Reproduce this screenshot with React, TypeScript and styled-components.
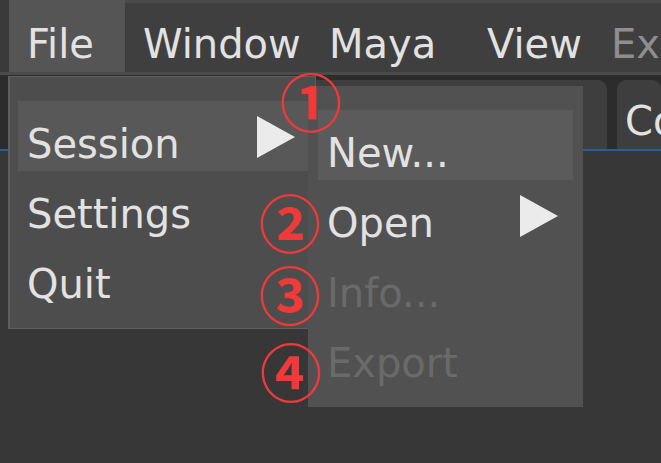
import styled, { createGlobalStyle } from "styled-components";

const GlobalStyle = createGlobalStyle`
  html, body {
    margin: 0;
    padding: 0;
    width: 661px;
    height: 463px;
    overflow: hidden;
    background: #373737;
  }
  body {
    font-family: "DejaVu Sans", "Liberation Sans", sans-serif;
  }
`;

const Screen = styled.div`
  position: relative;
  width: 661px;
  height: 463px;
  display: flex;
  flex-direction: column;
  background: #373737;
`;

const MenuBar = styled.div`
  display: flex;
  height: 72px;
  padding-left: 9px;
  background: linear-gradient(#4a4a4a 0 3px, #3f3f3f 3px);
  border-bottom: 3px solid #4b4b4b;
  box-shadow: inset 9px 0 0 #3a3a3a;
`;

const MenuTitle = styled.div<{ $w?: number; $active?: boolean; $disabled?: boolean }>`
  box-sizing: border-box;
  flex: ${(p) => (p.$w ? `0 0 ${p.$w}px` : "1 1 auto")};
  height: 72px;
  padding: 24px 0 0 18px;
  font-size: 40px;
  line-height: 1;
  white-space: nowrap;
  overflow: hidden;
  color: ${(p) => (p.$disabled ? "#8e8e8e" : "#e2e2e2")};
  background: ${(p) => (p.$active ? "#555555" : "transparent")};
`;

const TabBar = styled.div`
  display: flex;
  align-items: flex-end;
  gap: 10px;
  height: 74px;
  padding-left: 300px;
  background: #2c2c2c;
  border-bottom: 2px solid #2b5f8f;
`;

const Tab = styled.div<{ $w?: number }>`
  box-sizing: border-box;
  flex: ${(p) => (p.$w ? `0 0 ${p.$w}px` : "1 1 auto")};
  height: 69px;
  padding: 21px 0 0 8px;
  border-radius: 9px 9px 0 0;
  background: #3e3e3e;
  color: #e2e2e2;
  font-size: 40px;
  line-height: 1;
  white-space: nowrap;
  overflow: hidden;
`;

const Workspace = styled.div`
  flex: 1;
  background: #373737;
`;

const MenuPanel = styled.div<{ $x: number; $y: number; $w: number; $bg: string; $border?: string }>`
  position: absolute;
  left: ${(p) => p.$x}px;
  top: ${(p) => p.$y}px;
  width: ${(p) => p.$w}px;
  box-sizing: border-box;
  display: flex;
  flex-direction: column;
  padding: 24px 0 17px 8px;
  background: ${(p) => p.$bg};
  border: ${(p) => (p.$border ? `1px solid ${p.$border}` : "none")};
  border-left-width: ${(p) => (p.$border ? "2px" : "0")};
`;

const MenuRow = styled.div<{ $hl?: string; $disabled?: boolean; $inset: number }>`
  box-sizing: border-box;
  display: flex;
  justify-content: space-between;
  height: 70px;
  margin-right: ${(p) => p.$inset}px;
  padding: 23px 15px 0 9px;
  font-size: 40px;
  line-height: 1;
  white-space: nowrap;
  color: ${(p) => (p.$disabled ? "#6a6a6a" : "#e2e2e2")};
  background: ${(p) => p.$hl ?? "transparent"};
`;

const Arrow = styled.svg`
  width: 38px;
  height: 42px;
  margin-top: -8px;
  flex: none;
`;

const Marker = styled.div<{ $x: number; $y: number }>`
  position: absolute;
  left: ${(p) => p.$x}px;
  top: ${(p) => p.$y}px;
  transform: translate(-50%, -50%);
  font-family: "Noto Sans CJK JP", "Noto Sans CJK SC", sans-serif;
  font-size: 62px;
  font-weight: 700;
  line-height: 1;
  color: #f03a3a;
`;

const SubArrow = () => (
  <Arrow viewBox="0 0 38 42">
    <polygon points="0,0 38,21 0,42" fill="#ebebeb" />
  </Arrow>
);

const titles = [
  { label: "File", w: 116, active: true },
  { label: "Window", w: 186 },
  { label: "Maya", w: 158 },
  { label: "View", w: 124 },
  { label: "Export", disabled: true },
];

const fileItems = [
  { label: "Session", sub: true, hl: true },
  { label: "Settings" },
  { label: "Quit" },
];

const sessionItems = [
  { label: "New...", hl: true },
  { label: "Open", sub: true },
  { label: "Info...", disabled: true },
  { label: "Export", disabled: true },
];

const markers = [
  { n: "①", x: 311, y: 100 },
  { n: "②", x: 290, y: 221 },
  { n: "③", x: 290, y: 293 },
  { n: "④", x: 291, y: 370 },
];

export default function App() {
  return (
    <Screen>
      <GlobalStyle />
      <MenuBar>
        {titles.map((t) => (
          <MenuTitle key={t.label} $w={t.w} $active={t.active} $disabled={t.disabled}>
            {t.label}
          </MenuTitle>
        ))}
      </MenuBar>
      <TabBar>
        <Tab $w={307} />
        <Tab>Console</Tab>
      </TabBar>
      <Workspace />

      <MenuPanel $x={8} $y={76} $w={308} $bg="#4d4d4d" $border="#5e5e5e">
        {fileItems.map((it) => (
          <MenuRow key={it.label} $inset={5} $hl={it.hl ? "#585858" : undefined}>
            <span>{it.label}</span>
            {it.sub && <SubArrow />}
          </MenuRow>
        ))}
      </MenuPanel>

      <MenuPanel $x={308} $y={86} $w={275} $bg="#515151">
        <div style={{ height: 0 }} />
        {sessionItems.map((it) => (
          <MenuRow
            key={it.label}
            $inset={10}
            $hl={it.hl ? "#5b5b5b" : undefined}
            $disabled={it.disabled}
            style={{ marginLeft: 2 }}
          >
            <span>{it.label}</span>
            {it.sub && <SubArrow />}
          </MenuRow>
        ))}
      </MenuPanel>

      {markers.map((m) => (
        <Marker key={m.n} $x={m.x} $y={m.y}>
          {m.n}
        </Marker>
      ))}
    </Screen>
  );
}
